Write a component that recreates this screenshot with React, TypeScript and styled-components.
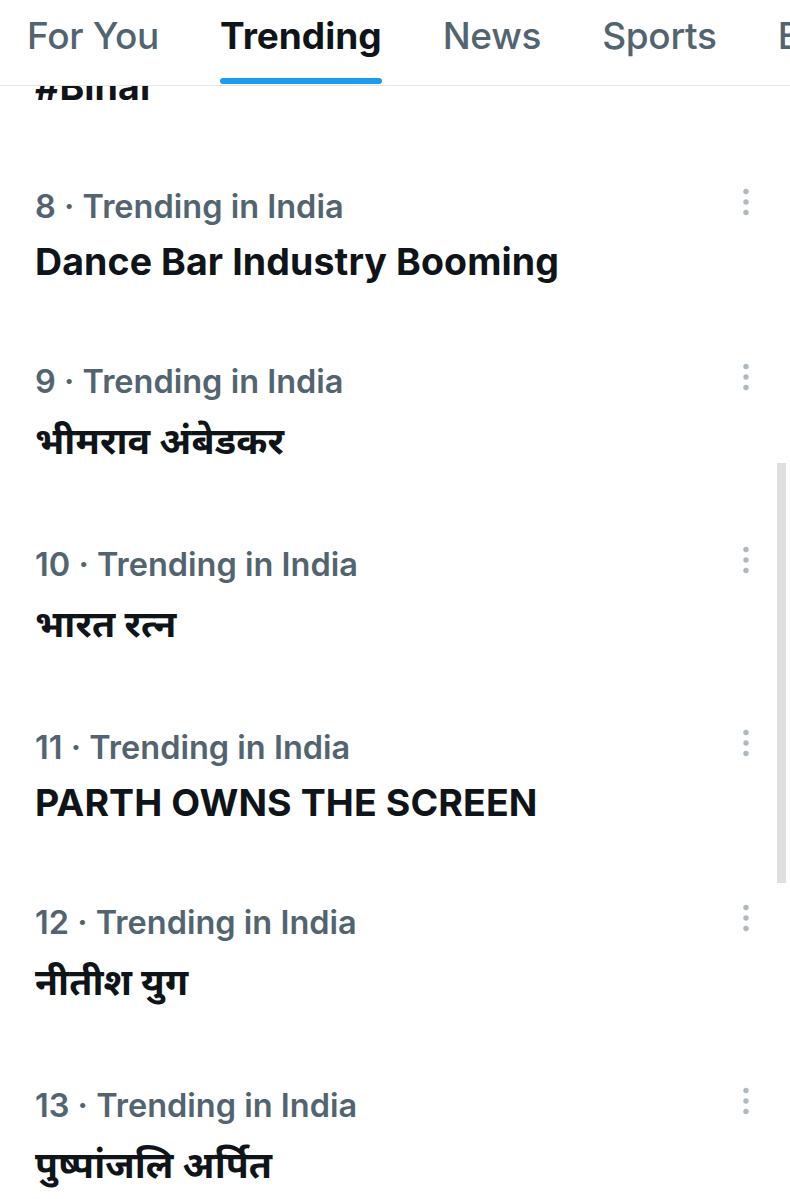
import React from 'react'
import styled, { createGlobalStyle } from 'styled-components'

const GlobalStyle = createGlobalStyle`
  html, body {
    margin: 0;
    padding: 0;
    background: #ffffff;
  }
  body {
    font-family: Inter, "Noto Sans Devanagari", "Noto Sans", sans-serif;
    -webkit-font-smoothing: antialiased;
  }
`

type Trend = {
  rank: number
  title: string
  devanagari?: boolean
}

const trends: Trend[] = [
  { rank: 7, title: '#Bihar' },
  { rank: 8, title: 'Dance Bar Industry Booming' },
  { rank: 9, title: 'भीमराव अंबेडकर', devanagari: true },
  { rank: 10, title: 'भारत रत्न', devanagari: true },
  { rank: 11, title: 'PARTH OWNS THE SCREEN' },
  { rank: 12, title: 'नीतीश युग', devanagari: true },
  { rank: 13, title: 'पुष्पांजलि अर्पित', devanagari: true },
]

const tabs = ['For You', 'Trending', 'News', 'Sports', 'Entertainment']

const MoreIcon: React.FC = () => (
  <svg width="10" height="30" viewBox="0 0 10 30" aria-hidden="true">
    <circle cx="5" cy="4.5" r="2.7" fill="#aeb9c1" />
    <circle cx="5" cy="15" r="2.7" fill="#aeb9c1" />
    <circle cx="5" cy="25.5" r="2.7" fill="#aeb9c1" />
  </svg>
)

export default function App() {
  return (
    <Page>
      <GlobalStyle />
      <TabBar>
        {tabs.map((tab) => (
          <Tab key={tab} $active={tab === 'Trending'}>
            {tab}
          </Tab>
        ))}
      </TabBar>
      <Feed>
        <List>
          {trends.map((trend) => (
            <Row key={trend.rank}>
              <RowTop>
                <Meta>{trend.rank} · Trending in India</Meta>
                <MoreButton>
                  <MoreIcon />
                </MoreButton>
              </RowTop>
              <Title $devanagari={trend.devanagari}>{trend.title}</Title>
            </Row>
          ))}
        </List>
        <Scrollbar />
      </Feed>
    </Page>
  )
}

const Page = styled.div`
  width: 790px;
  height: 1199px;
  display: flex;
  flex-direction: column;
  overflow: hidden;
  background: #ffffff;
`
const TabBar = styled.nav`
  height: 85px;
  flex: none;
  display: flex;
  gap: 61px;
  padding-left: 27px;
  border-bottom: 1.5px solid #e3e6e8;
  white-space: nowrap;
  overflow: hidden;
  position: relative;
  z-index: 1;
  background: #ffffff;
`
const Tab = styled.div<{ $active?: boolean }>`
  position: relative;
  flex: none;
  padding-top: 11px;
  font-size: 37px;
  line-height: 50px;
  font-weight: ${(p) => (p.$active ? 700 : 500)};
  color: ${(p) => (p.$active ? '#0f1419' : '#536471')};
  letter-spacing: ${(p) => (p.$active ? '0' : '-0.3px')};

  &::after {
    content: '';
    display: ${(p) => (p.$active ? 'block' : 'none')};
    position: absolute;
    left: 0;
    right: 0;
    bottom: 1px;
    height: 6px;
    border-radius: 3px;
    background: #1d9bf0;
  }
`
const Feed = styled.main`
  position: relative;
  flex: 1;
  overflow: hidden;
`
const List = styled.div`
  margin-top: -75px;
  display: flex;
  flex-direction: column;
`
const Row = styled.article`
  padding: 0 39px 75px 35px;
`
const RowTop = styled.div`
  display: flex;
  align-items: center;
  justify-content: space-between;
  height: 40px;
`
const Meta = styled.span`
  font-size: 32.5px;
  font-weight: 600;
  color: #536471;
  letter-spacing: 0;
`
const MoreButton = styled.span`
  display: flex;
  margin-top: -8px;
`
const Title = styled.div<{ $devanagari?: boolean }>`
  margin-top: 12px;
  height: ${(p) => (p.$devanagari ? 56 : 48)}px;
  line-height: ${(p) => (p.$devanagari ? 56 : 48)}px;
  font-size: 37.5px;
  font-weight: 700;
  color: #0f1419;
  letter-spacing: 0.1px;
`
const Scrollbar = styled.div`
  position: absolute;
  top: 377px;
  right: 4px;
  width: 9px;
  height: 420px;
  background: #dfdfdf;
`
